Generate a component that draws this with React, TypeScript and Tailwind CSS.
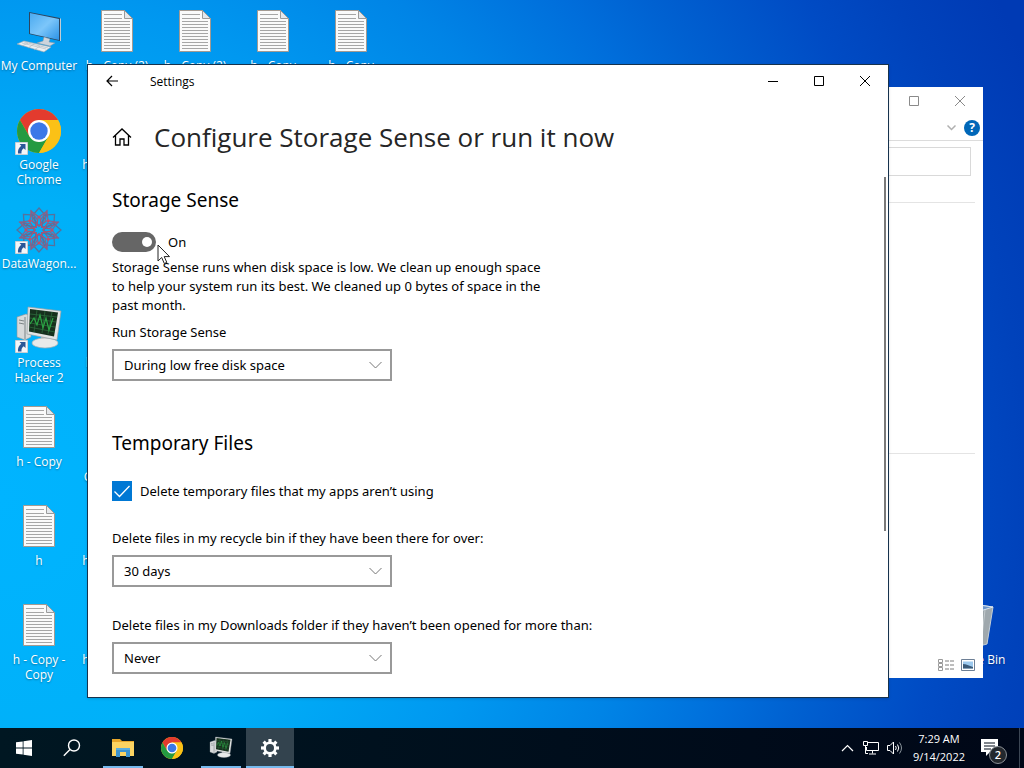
import React from 'react';
import clsx from 'clsx';

const DocumentIcon: React.FC = () => (
  <svg width="48" height="48" viewBox="0 0 48 48" aria-hidden="true">
    <path d="M8.5 2.5h23l8 8v33h-31z" fill="#fafafa" stroke="#a39a92" />
    <path d="M31.5 2.5v8h8z" fill="#e4e8ec" stroke="#9a9a9a" />
    <path
      d="M11 6.5h18M11 10.5h18M11 13.5h26M11 16.5h26M11 19.5h26M11 22.5h26M11 25.5h26M11 28.5h26M11 31.5h26M11 34.5h26M11 37.5h26M11 40.5h26"
      stroke="#a6a6a6"
    />
  </svg>
);

const ComputerIcon: React.FC = () => (
  <svg width="48" height="48" viewBox="0 0 48 48" aria-hidden="true">
    <defs>
      <linearGradient id="screen" x1="0" y1="0" x2="1" y2="1">
        <stop offset="0" stopColor="#4aaaf0" />
        <stop offset="0.5" stopColor="#7cc6fa" />
        <stop offset="1" stopColor="#2b93e6" />
      </linearGradient>
    </defs>
    <path d="M14 4l31 6v23l-31-7z" fill="#2c4560" />
    <path d="M15 5l29 6v21l-29-6.500z" fill="url(#screen)" />
    <path d="M45 10l1 1v22l-1 0z" fill="#c3ccd4" />
    <path d="M29 29l6 2-1 3 6 1-5 3-13-3 6-2z" fill="#cdd4dc" stroke="#8a97a3" strokeWidth="0.5" />
    <path d="M9 33l27 6-7 5-27-8z" fill="#eceff1" stroke="#9aa5ad" strokeWidth="0.6" />
    <path d="M7 35l24 6M9 34l24 6M13 35l-6 3M19 36l-6 4M25 38l-6 4" stroke="#aab4bc" strokeWidth="0.6" />
  </svg>
);

const ChromeIcon: React.FC<{ size: number }> = ({ size }) => (
  <svg width={size} height={size} viewBox="0 0 48 48" aria-hidden="true">
    <circle cx="24" cy="24" r="22" fill="#fbc116" />
    <path d="M4.950 13A22 22 0 0 1 43.050 13H24L14.470 29.500z" fill="#e33b2e" />
    <path d="M4.950 13A22 22 0 0 0 24 46L33.530 29.500 24 35 14.470 29.500z" fill="#249a41" />
    <path d="M24 13h19.050A22 22 0 0 1 24 46l9.530-16.500z" fill="#fbc116" />
    <circle cx="24" cy="24" r="11" fill="#fff" />
    <circle cx="24" cy="24" r="8.700" fill="#3b78e7" />
  </svg>
);

const PETALS = [0, 45, 90, 135, 180, 225, 270, 315];

const DataWagonIcon: React.FC = () => (
  <svg width="48" height="48" viewBox="0 0 48 48" fill="none" aria-hidden="true">
    {PETALS.map((angle) => (
      <g key={angle} transform={`rotate(${angle} 24 24)`}>
        <path d="M24 2l7 8-7 10-7-10z" stroke="#56719c" strokeWidth="1.3" />
        <path d="M16 5l8 6 8-6-2 11-6 4-6-4z" stroke="#8d5f86" strokeWidth="1.1" />
        <path d="M24 20l-9-6M24 20l9-6" stroke="#b05272" strokeWidth="1" />
        <circle cx="24" cy="11" r="1.500" fill="#c84d66" />
      </g>
    ))}
  </svg>
);

const ProcessHackerIcon: React.FC<{ size: number }> = ({ size }) => (
  <svg width={size} height={size} viewBox="0 0 48 48" aria-hidden="true">
    <path d="M2 12l9-3 5 2v21l-6 3-8-3z" fill="#d7dadb" stroke="#8e9599" strokeWidth="0.600" />
    <path d="M4 15l5 1M4 18l5 1M10 12v22" stroke="#7b8386" />
    <path d="M26 30l10 2 0 5-10-1z" fill="#b4b9bb" />
    <ellipse cx="30" cy="38" rx="13" ry="5" fill="#e8eaea" stroke="#a9afb2" strokeWidth="0.700" />
    <path d="M13 2l33 4-4 29-30-6z" fill="#e2e4e4" stroke="#9aa0a3" strokeWidth="0.700" />
    <path d="M15 4l28 3.500-4 24-25-5z" fill="#16301d" />
    <path d="M15 9l27 3M15 13l26 4M15 18l25 4M14 22l26 5M22 5l-3 22M30 6l-3 22M37 7l-4 22" stroke="#2c6a3b" strokeWidth="0.800" />
    <path d="M15 19l4-6 3 7 3-10 3 13 3-10 3 12 4-12" fill="none" stroke="#2ba444" strokeWidth="1.200" />
  </svg>
);

const RecycleBinIcon: React.FC = () => (
  <svg width="48" height="48" viewBox="0 0 48 48" aria-hidden="true">
    <path d="M7 6l15-4 21 3-6 37-11 3-13-4z" fill="#9fa8ad" stroke="#c6d0d6" />
    <path d="M7 6l15-4 21 3-16 5z" fill="#6d95c9" stroke="#dbe6ef" />
    <path d="M27 10l-1 35M35 8l-4 35M14 8l3 33" stroke="#c3cacd" />
  </svg>
);

type IconName = 'computer' | 'chrome' | 'datawagon' | 'hacker' | 'document' | 'bin';

interface DesktopItem {
  icon: IconName;
  label: string;
  shortcut?: boolean;
}

const COLUMNS: (DesktopItem | null)[][] = [
  [
    { icon: 'computer', label: 'My Computer' },
    { icon: 'chrome', label: 'Google Chrome', shortcut: true },
    { icon: 'datawagon', label: 'DataWagon...', shortcut: true },
    { icon: 'hacker', label: 'Process Hacker 2', shortcut: true },
    { icon: 'document', label: 'h - Copy' },
    { icon: 'document', label: 'h' },
    { icon: 'document', label: 'h - Copy - Copy' },
  ],
  [
    { icon: 'document', label: 'h - Copy (2)' },
    { icon: 'document', label: 'h - Copy (3) - Copy' },
    null,
    { icon: 'document', label: 'h - Copy (2)' },
    { icon: 'document', label: 'h - Copy - Copy - Copy' },
    { icon: 'document', label: 'h - Copy (4) - Copy' },
    { icon: 'document', label: 'h - Copy (5) - Copy' },
  ],
  [{ icon: 'document', label: 'h - Copy (2)' }],
  [{ icon: 'document', label: 'h - Copy' }],
  [{ icon: 'document', label: 'h - Copy' }],
];

const renderIcon = (icon: IconName) => {
  switch (icon) {
    case 'computer':
      return <ComputerIcon />;
    case 'chrome':
      return <ChromeIcon size={48} />;
    case 'datawagon':
      return <DataWagonIcon />;
    case 'hacker':
      return <ProcessHackerIcon size={48} />;
    case 'bin':
      return <RecycleBinIcon />;
    default:
      return <DocumentIcon />;
  }
};

const DesktopIcon: React.FC<{ item: DesktopItem }> = ({ item }) => (
  <button type="button" className="flex h-[99px] w-[78px] flex-col items-center gap-0.5 pt-2 text-xs leading-[15px] text-white">
    <span className="relative size-12">
      {renderIcon(item.icon)}
      {item.shortcut && (
        <svg className="absolute bottom-0 left-0" width="13" height="13" viewBox="0 0 13 13" aria-hidden="true">
          <path d="M.5.5h12v12H.5z" fill="#f4f6f8" stroke="#c9ced3" />
          <path d="M4.500 2h6v6L8.700 6.200C7 7.500 6.200 9 6.500 11.500H3C2.500 8.500 4 5.500 6.300 3.800z" fill="#2b5797" />
        </svg>
      )}
    </span>
    <span className="w-full text-center [text-shadow:0_1px_2px_rgba(0,0,0,0.35)]">{item.label}</span>
  </button>
);

const MaximizeGlyph: React.FC = () => (
  <svg width="10" height="10" viewBox="0 0 10 10" fill="none" stroke="currentColor" aria-hidden="true">
    <path d="M.5.5h9v9h-9z" />
  </svg>
);

const CloseGlyph: React.FC = () => (
  <svg width="10" height="10" viewBox="0 0 10 10" fill="none" stroke="currentColor" aria-hidden="true">
    <path d="M0 0l10 10M10 0L0 10" />
  </svg>
);

const ExplorerWindow: React.FC = () => (
  <section
    aria-label="File Explorer"
    className="absolute top-[87px] right-[41px] bottom-[50px] left-[300px] flex flex-col bg-white text-[#8a8a8a]"
  >
    <div className="flex h-7 justify-end">
      <button type="button" aria-label="Maximize" className="flex w-[46px] items-center justify-center">
        <MaximizeGlyph />
      </button>
      <button type="button" aria-label="Close" className="flex w-[46px] items-center justify-center">
        <CloseGlyph />
      </button>
    </div>
    <div className="flex h-[26px] items-center justify-end gap-1 border-b border-[#dcdcdc] pr-[3px]">
      <button type="button" aria-label="Expand the ribbon" className="p-1">
        <svg width="9" height="6" viewBox="0 0 9 6" fill="none" stroke="#b0b0b0" strokeWidth="1.500" aria-hidden="true">
          <path d="M.5.5l4 4 4-4" />
        </svg>
      </button>
      <button
        type="button"
        aria-label="Help"
        className="flex size-4 items-center justify-center rounded-full bg-[#0067b8] text-xs font-bold text-white"
      >
        ?
      </button>
    </div>
    <div className="mr-2 border-b border-[#e4e4e4] pt-1.5 pr-1 pb-[26px]">
      <input aria-label="Search" className="block h-[29px] w-full border border-[#d9d9d9]" />
    </div>
    <div className="mr-2 h-[251px] border-b border-[#e4e4e4]" />
    <div className="mt-auto flex items-center justify-end gap-1.5 pr-2 pb-1.5">
      <button type="button" aria-label="Details view">
        <svg width="17" height="14" viewBox="0 0 17 14" fill="none" aria-hidden="true">
          <path d="M.5 1.500h4v3h-4zM.5 5.500h4v3h-4zM.5 9.500h4v3h-4z" stroke="#9a9a9a" />
          <path d="M7 3h4M12 3h4M7 7h4M12 7h4M7 11h4M12 11h4" stroke="#7d7d7d" />
        </svg>
      </button>
      <button type="button" aria-label="Large icons view">
        <svg width="14" height="12" viewBox="0 0 14 12" aria-hidden="true">
          <path d="M.5.5h13v11H.5z" fill="#fff" stroke="#6d7f95" />
          <path d="M2 2.500h10v7H2z" fill="#9cc9ee" />
          <path d="M2 5c3 0 6 1.500 10 3v1.500H2z" fill="#3a5a78" />
        </svg>
      </button>
    </div>
  </section>
);

const SelectBox: React.FC<{ id: string; options: string[] }> = ({ id, options }) => (
  <div className="grid h-8 w-[280px] items-center">
    <select
      id={id}
      className="col-start-1 row-start-1 h-8 w-full appearance-none border-2 border-[#999] bg-white pr-8 pl-2.5 text-black outline-none"
    >
      {options.map((option) => (
        <option key={option}>{option}</option>
      ))}
    </select>
    <svg
      className="pointer-events-none col-start-1 row-start-1 mr-2.5 justify-self-end"
      width="13"
      height="8"
      viewBox="0 0 13 8"
      fill="none"
      stroke="#777"
      aria-hidden="true"
    >
      <path d="M.5 1l6 6 6-6" />
    </svg>
  </div>
);

const SettingsWindow: React.FC = () => {
  const [enabled, setEnabled] = React.useState(true);
  const [deleteTemp, setDeleteTemp] = React.useState(true);

  return (
    <section
      aria-label="Settings"
      className="absolute top-16 right-[135px] bottom-[30px] left-[87px] flex flex-col overflow-hidden border border-[#16324d] bg-white text-black shadow-sm"
    >
      <div className="flex h-8 shrink-0 items-stretch">
        <button type="button" aria-label="Back" className="flex w-12 items-center justify-center">
          <svg width="12" height="12" viewBox="0 0 12 12" fill="none" stroke="currentColor" strokeWidth="1.200" aria-hidden="true">
            <path d="M12 6H1M6 1L1 6l5 5" />
          </svg>
        </button>
        <span className="flex flex-1 items-center pt-0.5 pl-3.5 text-xs">Settings</span>
        <button type="button" aria-label="Minimize" className="flex w-[46px] items-center justify-center">
          <svg width="10" height="10" viewBox="0 0 10 10" stroke="currentColor" aria-hidden="true">
            <path d="M0 5.500h10" />
          </svg>
        </button>
        <button type="button" aria-label="Maximize" className="flex w-[46px] items-center justify-center">
          <MaximizeGlyph />
        </button>
        <button type="button" aria-label="Close" className="flex w-[46px] items-center justify-center">
          <CloseGlyph />
        </button>
      </div>

      <header className="flex h-20 shrink-0 items-center gap-[22px] pl-6">
        <button type="button" aria-label="Home">
          <svg width="20" height="20" viewBox="0 0 20 20" fill="none" stroke="currentColor" strokeWidth="1.300" aria-hidden="true">
            <path d="M1 10.500L10 2l9 8.500M3.500 8.500v9.500h4.500v-6h4v6h4.500V8.500" />
          </svg>
        </button>
        <h1 className="text-[26px] text-[#262626]">Configure Storage Sense or run it now</h1>
      </header>

      <div className="flex min-h-0 flex-1 justify-between font-['Noto_Sans','Open_Sans',sans-serif] text-[13px] leading-[19px]">
        <div className="flex flex-col items-start pl-6">
          <h2 className="mt-[11px] text-[19px] leading-6">Storage Sense</h2>
          <label className="mt-5 flex h-5 items-center gap-3">
            <input
              type="checkbox"
              role="switch"
              checked={enabled}
              onChange={(e) => setEnabled(e.target.checked)}
              className="flex h-5 w-11 appearance-none items-center rounded-full bg-[#999] px-1 before:size-2.5 before:rounded-full before:bg-white checked:justify-end checked:bg-[#666]"
            />
            {enabled ? 'On' : 'Off'}
          </label>
          <p className="mt-1.5 max-w-[444px]">
            Storage Sense runs when disk space is low. We clean up enough space to help your system run its best. We
            cleaned up 0 bytes of space in the past month.
          </p>
          <label htmlFor="run" className="mt-2 mb-[7px]">
            Run Storage Sense
          </label>
          <SelectBox id="run" options={['During low free disk space', 'Every day', 'Every week', 'Every month']} />

          <h2 className="mt-[50px] text-[19px] leading-6">Temporary Files</h2>
          <label className="mt-[26px] flex h-5 items-center gap-2">
            <span className="grid size-5">
              <input
                type="checkbox"
                checked={deleteTemp}
                onChange={(e) => setDeleteTemp(e.target.checked)}
                className="col-start-1 row-start-1 size-5 appearance-none border-2 border-[#666] checked:border-[#0078d4] checked:bg-[#0078d4]"
              />
              <svg
                className="pointer-events-none col-start-1 row-start-1"
                width="20"
                height="20"
                viewBox="0 0 20 20"
                fill="none"
                stroke="#fff"
                strokeWidth="1.300"
                aria-hidden="true"
              >
                <path d="M2.500 10.500l5 5L17.500 5" />
              </svg>
            </span>
            Delete temporary files that my apps aren’t using
          </label>
          <label htmlFor="recycle" className="mt-7 mb-[7px]">
            Delete files in my recycle bin if they have been there for over:
          </label>
          <SelectBox id="recycle" options={['30 days', 'Never', '1 day', '14 days', '60 days']} />
          <label htmlFor="downloads" className="mt-[29px] mb-[7px]">
            Delete files in my Downloads folder if they haven’t been opened for more than:
          </label>
          <SelectBox id="downloads" options={['Never', '1 day', '14 days', '30 days', '60 days']} />
        </div>
        <div className="mr-0.5 h-[354px] w-0.5 bg-[#7a7a7a]" />
      </div>
    </section>
  );
};

const TaskButton: React.FC<{
  label: string;
  open?: boolean;
  active?: boolean;
  children: React.ReactNode;
}> = ({ label, open, active, children }) => (
  <button
    type="button"
    aria-label={label}
    className={clsx('flex w-12 flex-col items-center', active && 'bg-[#33434e]')}
  >
    <span className="flex flex-1 items-center pt-0.5">{children}</span>
    <span className={clsx('h-0.5', active ? 'w-full' : 'w-10', (open || active) && 'bg-[#76b9ed]')} />
  </button>
);

const Taskbar: React.FC = () => (
  <footer className="flex h-10 shrink-0 items-stretch justify-between bg-linear-to-r from-[#001722] to-[#000717] text-white">
    <nav aria-label="Taskbar" className="flex">
      <TaskButton label="Start">
        <svg width="16" height="16" viewBox="0 0 16 16" fill="#fff" aria-hidden="true">
          <path d="M0 2.300L6.700 1.400v6.200H0zM7.500 1.300L16 0v7.600H7.500zM0 8.400h6.700v6.200L0 13.700zM7.500 8.400H16V16l-8.500-1.300z" />
        </svg>
      </TaskButton>
      <TaskButton label="Search">
        <svg width="18" height="18" viewBox="0 0 18 18" fill="none" stroke="#fff" strokeWidth="1.400" aria-hidden="true">
          <circle cx="11" cy="6.500" r="5.500" />
          <path d="M7 10.500L.8 16.800" />
        </svg>
      </TaskButton>
      <div className="ml-[3px] flex gap-px">
        <TaskButton label="File Explorer" open>
          <svg width="22" height="20" viewBox="0 0 22 20" aria-hidden="true">
            <path d="M0 1h8l2 2h12v5H0z" fill="#e8a72b" />
            <path d="M0 4h22v14H0z" fill="#fcd462" />
            <path d="M4 10h14v9h-4v-5H8v5H4z" fill="#3c93cf" />
            <path d="M4 10h14v2H4z" fill="#5aaee0" />
          </svg>
        </TaskButton>
        <TaskButton label="Google Chrome">
          <ChromeIcon size={24} />
        </TaskButton>
        <TaskButton label="Process Hacker 2" open>
          <ProcessHackerIcon size={24} />
        </TaskButton>
        <TaskButton label="Settings" active>
          <svg width="20" height="20" viewBox="0 0 20 20" fill="none" stroke="#fff" aria-hidden="true">
            <circle cx="10" cy="10" r="5.300" strokeWidth="2.600" />
            {PETALS.map((angle) => (
              <path key={angle} d="M10 1v3" strokeWidth="3.200" transform={`rotate(${angle} 10 10)`} />
            ))}
          </svg>
        </TaskButton>
      </div>
    </nav>

    <div className="flex items-center">
      <div className="flex items-center gap-2">
        <button type="button" aria-label="Show hidden icons">
          <svg width="13" height="8" viewBox="0 0 13 8" fill="none" stroke="#fff" strokeWidth="1.200" aria-hidden="true">
            <path d="M1 7l5.500-5.500L12 7" />
          </svg>
        </button>
        <button type="button" aria-label="Network">
          <svg width="17" height="14" viewBox="0 0 17 14" fill="none" stroke="#fff" aria-hidden="true">
            <path d="M6 1.500h10.500v8H4.500V6M10.500 9.500v3M7 13h7M1.500.5h4v4h-4zM3.500 4.500v8H6" />
          </svg>
        </button>
        <button type="button" aria-label="Volume">
          <svg width="16" height="14" viewBox="0 0 16 14" fill="none" stroke="#fff" aria-hidden="true">
            <path d="M.5 4.500h2.500L6.500 1v12L3 9.500H.5z" />
            <path d="M8.500 5q1.500 2 0 4M10.500 3.500q2.500 3.500 0 7" />
            <path d="M12.500 1.500q4 5.500 0 11" stroke="#8b959c" />
          </svg>
        </button>
      </div>
      <button type="button" className="px-2.5 text-center text-[11px] leading-[18px]">
        <time className="block">7:29 AM</time>
        <span className="block">9/14/2022</span>
      </button>
      <button type="button" aria-label="Notifications" className="relative ml-1.5 h-6 w-[38px]">
        <svg width="24" height="24" viewBox="0 0 24 24" aria-hidden="true">
          <path d="M0 3h17v13h-8l-4 4v-4H0z" fill="#fff" />
          <path d="M3 7h11M3 10h11M3 13h7" stroke="#000b19" />
        </svg>
        <span className="absolute top-2.5 left-2 flex size-[18px] items-center justify-center rounded-full border border-[#8b9096] bg-[#23282e] text-[11px] leading-3 font-semibold">
          2
        </span>
      </button>
      <button type="button" aria-label="Show desktop" className="h-full w-[5px] border-l border-[#3c4654]" />
    </div>
  </footer>
);

const App: React.FC = () => (
  <div className="flex h-screen flex-col overflow-hidden bg-[radial-gradient(circle_at_0_65%,#00b4ff_0%,#00b0f8_26%,#0098f0_44%,#0084e6_56%,#006edb_66%,#0061d1_72%,#004bc4_83%,#0042bb_90%,#003ab4_98%)] font-['Open_Sans','Noto_Sans',sans-serif]">
    <main className="relative min-h-0 flex-1">
      <div className="flex">
        {COLUMNS.map((items, column) => (
          <div key={column} className="flex flex-col">
            {items.map((item, row) =>
              item ? <DesktopIcon key={row} item={item} /> : <div key={row} className="h-[99px] w-[78px]" />,
            )}
          </div>
        ))}
      </div>
      <div className="absolute right-[11px] bottom-[35px]">
        <DesktopIcon item={{ icon: 'bin', label: 'Recycle Bin' }} />
      </div>
      <ExplorerWindow />
      <SettingsWindow />
      <svg className="pointer-events-none absolute top-[244px] left-[157px]" width="14" height="21" viewBox="0 0 14 21" aria-hidden="true">
        <path d="M1 1v16l3.700-3.500 2.600 6 2.500-1.100-2.600-5.800H12.500z" fill="#fff" stroke="#222" />
      </svg>
    </main>
    <Taskbar />
  </div>
);

export default App;
